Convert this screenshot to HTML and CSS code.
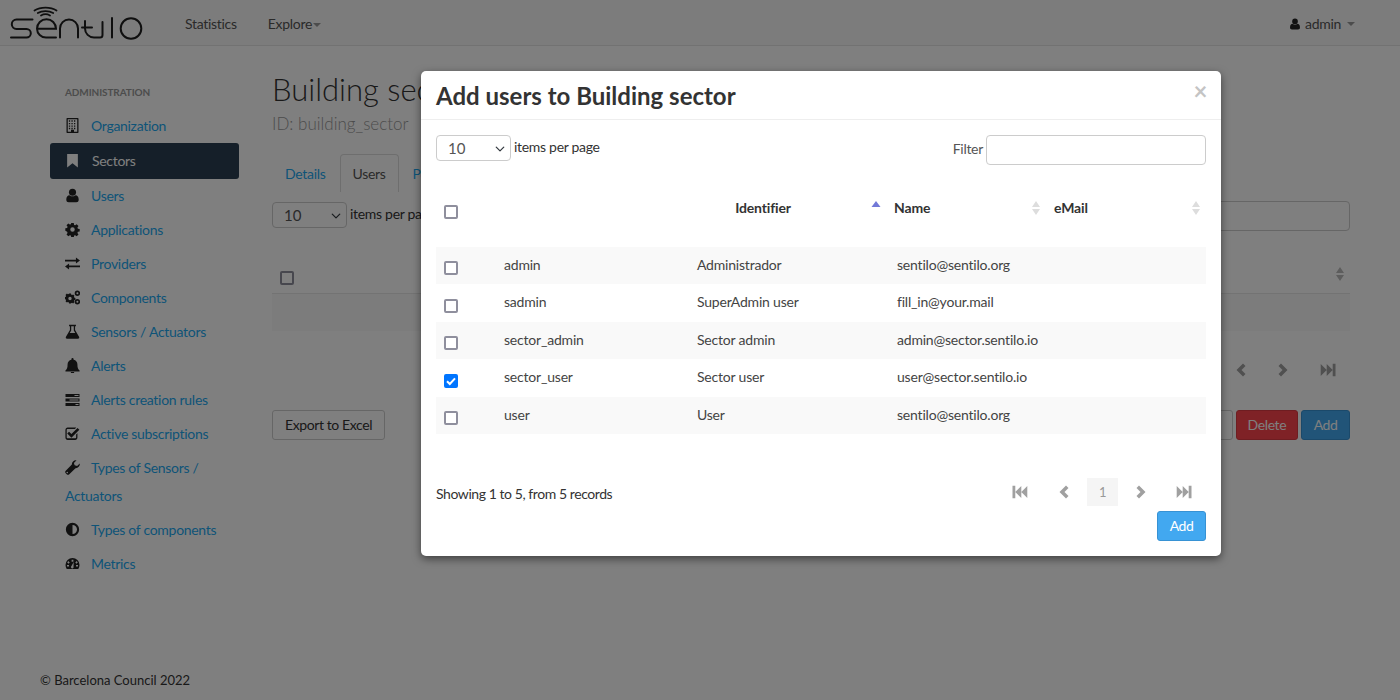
FILE: index.html
```html
<!DOCTYPE html>
<html lang="en">
<head>
<meta charset="utf-8">
<title>Sentilo</title>
<link rel="stylesheet" href="styles.css">
</head>
<body>
<svg class="sprite" aria-hidden="true">
  <symbol id="i-building" viewBox="0 0 14 14"><path fill-rule="evenodd" d="M2 0h10a.6.6 0 0 1 .6.6v12.8a.6.6 0 0 1-.6.6H2a.6.6 0 0 1-.6-.6V.6A.6.6 0 0 1 2 0zm.6 1.2v11.6h3V11h2.8v1.8h3V1.2zM3.6 2.2h1.2v1.2H3.6zm2.4 0h1.200v1.200H6zm2.400 0h1.200v1.200H8.400zm2 0h.1zM3.600 4.600h1.200v1.200H3.600zm2.400 0h1.200v1.200H6zm2.400 0h1.200v1.200H8.400zM3.600 7h1.200v1.200H3.600zM6 7h1.200v1.200H6zm2.400 0h1.200v1.200H8.400zM3.600 9.200h1.200v1.200H3.600zm2.400 0h1.200v1.200H6zm2.400 0h1.200v1.200H8.400z"/></symbol>
  <symbol id="i-bookmark" viewBox="0 0 14 14"><path d="M2 1h10v12.500L7 9.500 2 13.500z"/></symbol>
  <symbol id="i-user" viewBox="0 0 14 14"><circle cx="7" cy="4" r="3.300"/><path d="M1.200 11c0-2.800 1.200-4.300 3-4.300 1 .8 1.800 1.100 2.800 1.100s1.800-.3 2.800-1.100c1.800 0 3 1.500 3 4.300 0 1.600-1 2.300-2.200 2.300H3.400c-1.200 0-2.200-.7-2.200-2.300z"/></symbol>
  <symbol id="i-cog" viewBox="0 0 14 14"><path fill-rule="evenodd" d="M5.800 1h2.400l.3 1.700 1 .4 1.400-1 1.700 1.700-1 1.400.4 1 1.700.3v2.400l-1.700.3-.4 1 1 1.400-1.700 1.700-1.400-1-1 .4-.3 1.700H5.800l-.3-1.700-1-.4-1.400 1-1.700-1.700 1-1.400-.4-1L.3 8.200V5.800L2 5.500l.4-1-1-1.400 1.700-1.700 1.400 1 1-.4zM7 4.900a2.100 2.100 0 1 0 0 4.200 2.100 2.100 0 0 0 0-4.200z"/></symbol>
  <symbol id="i-exchange" viewBox="0 0 14 14"><path d="M0 3.400h10.200V1.500L14 4.300l-3.800 2.800V5.200H0zM14 8.800H3.800V6.900L0 9.700l3.800 2.800v-1.900H14z"/></symbol>
  <symbol id="i-cogs" viewBox="0 0 15 14"><path fill-rule="evenodd" d="M4 3h2l.3 1.200.8.300 1-.6 1.400 1.400-.6 1 .3.800 1.200.3v2l-1.200.3-.3.800.6 1-1.400 1.400-1-.6-.8.300L6 13H4l-.3-1.200-.8-.3-1 .6L.5 10.700l.6-1-.3-.8L-.4 8.600v-2l1.200-.3.300-.8-.6-1L1.900 3.100l1 .6.8-.3zM5 6.300a1.700 1.700 0 1 0 0 3.400 1.700 1.700 0 0 0 0-3.400z"/><path fill-rule="evenodd" d="M12.400 0a2.700 2.700 0 1 1 0 5.400 2.700 2.700 0 0 1 0-5.400zm0 1.700a1 1 0 1 0 0 2 1 1 0 0 0 0-2zM12.400 8.600a2.700 2.700 0 1 1 0 5.400 2.700 2.700 0 0 1 0-5.400zm0 1.700a1 1 0 1 0 0 2 1 1 0 0 0 0-2z"/></symbol>
  <symbol id="i-flask" viewBox="0 0 14 14"><path fill-rule="evenodd" d="M3.800.8h6.400V2H9.400v3.600l3.700 6.200c.5.900 0 1.900-1 1.900H1.900c-1 0-1.500-1-1-1.900l3.700-6.200V2h-.8zM5.800 2v4L4.400 8.400h5.200L8.200 6V2z"/></symbol>
  <symbol id="i-bell" viewBox="0 0 14 14"><path d="M7 0a1 1 0 0 1 1 1v.6c2.300.4 3.600 2.200 3.600 4.400 0 3.200.6 4.500 2 5.700v.8H.4v-.8c1.400-1.200 2-2.500 2-5.700 0-2.200 1.300-4 3.600-4.400V1a1 1 0 0 1 1-1zM5.400 13.100h3.200a1.600 1.600 0 0 1-3.200 0z"/></symbol>
  <symbol id="i-tasks" viewBox="0 0 15 14"><path fill-rule="evenodd" d="M.5 1.500h14v3H.5zm9 1v1h4v-1zM.5 6h14v3H.5zm4 1v1h9V7zM.5 10.500h14v3H.5zm10 1v1h3v-1z"/></symbol>
  <symbol id="i-check" viewBox="0 0 14 14"><path d="M2.500 1.500h8l-1.200 1.200H2.500c-.5 0-.9.400-.9.900v7c0 .5.400.9.900.9h7c.5 0 .9-.4.900-.9V8l1.200-1.200v4c0 1.300-.9 2.200-2.100 2.200h-7C1.300 13 .4 12.100.4 10.800v-7c0-1.300.9-2.300 2.100-2.300z"/><path d="M3.800 5.300l2.200 2.200 5.700-5.700 1.700 1.700L6 10.900 2.100 7z"/></symbol>
  <symbol id="i-wrench" viewBox="0 0 14 14"><path fill-rule="evenodd" d="M13.800 3.200c.4 2.300-1.500 4.600-4 4.400L4 13.300c-.7.700-1.700.7-2.400 0l-.9-.9c-.7-.7-.7-1.700 0-2.400l5.700-5.800C6.200 1.700 8.400-.2 10.800.2L8.300 2.700l.7 2.300 2.300.7zM2.600 11.100a.7.7 0 1 0 0 1 .7.7 0 0 0 0-1z"/></symbol>
  <symbol id="i-adjust" viewBox="0 0 14 14"><path fill-rule="evenodd" d="M7 .8a6.200 6.200 0 1 1 0 12.400A6.200 6.200 0 0 1 7 .8zm0 2v8.400a4.200 4.200 0 0 1 0-8.400z" transform="matrix(-1 0 0 1 14 0)"/></symbol>
  <symbol id="i-dash" viewBox="0 0 15 14"><path fill-rule="evenodd" d="M7.500 1.500a7 7 0 0 1 7 7c0 1.500-.4 2.800-1.200 4H1.700C.9 11.300.5 10 .5 8.500a7 7 0 0 1 7-7zM6.600 3.200v2h1.800v-2zM3.300 4.600L2.200 6l1.400 1.200L4.700 6zm8.400 0L10.300 6l1.100 1.200L12.800 6zM2 8.600V10h2V8.600zm9 0V10h2V8.600zM8.700 5.500L6.500 9.600a1.300 1.300 0 1 0 2 .6z"/></symbol>
  <symbol id="i-first" viewBox="0 0 16 14"><path d="M.5 .8h2.800v12.400H.5zM3.300 7l6-6v12zM9.300 7l6-6v12z"/></symbol>
  <symbol id="i-prev" viewBox="0 0 10 14"><path d="M7 .5L9.500 3l-4 4 4 4L7 13.500.5 7z"/></symbol>
  <symbol id="i-next" viewBox="0 0 10 14"><path d="M3 .5L.5 3l4 4-4 4L3 13.500 9.500 7z"/></symbol>
  <symbol id="i-last" viewBox="0 0 16 14"><path d="M15.500 .8h-2.800v12.400h2.800zM12.700 7l-6-6v12zM6.700 7l-6-6v12z"/></symbol>
  <symbol id="i-sort" viewBox="0 0 10 16"><path d="M5 1l4 6H1zM5 15L1 9h8z"/></symbol>
  <symbol id="i-sort-up" viewBox="0 0 10 16"><path d="M5 3l4.500 6h-9z"/></symbol>
  <symbol id="i-chev" viewBox="0 0 16 16"><path d="M2 5l6 6 6-6" fill="none" stroke="#343a40" stroke-width="2" stroke-linecap="round" stroke-linejoin="round"/></symbol>
</svg>

<header class="navbar">
  <svg class="logo" viewBox="0 0 145 45" role="img" aria-label="sentilo">
    <g fill="none" stroke="#1e1e1e" stroke-width="2" stroke-linecap="round">
      <path d="M32.500 19.500H16.500a4.700 4.700 0 0 0 0 9.400h10a4.300 4.300 0 0 1 0 8.600H11"/>
      <path d="M37 28.700h19a9.500 9.500 0 0 0-19 0 9 9 0 0 0 9 8.800h10"/>
      <path d="M60 37.500V28.500a9 9 0 0 1 18 0V37.500"/>
      <path d="M85 21v7.500a9 9 0 0 0 9 9h6a2.500 2.500 0 0 0 2.500-2.500V22"/>
      <path d="M82 27.500h10"/>
      <path d="M112 18V37.500"/>
      <circle cx="131" cy="28.500" r="10.300"/>
      <path d="M34.500 10.500a15 9 0 0 1 22 0M37.800 13a11 6.500 0 0 1 15.400 0M41 15.500a6.500 4 0 0 1 9 0" stroke-width="1.800"/>
    </g>
  </svg>
  <nav class="nav-links">
    <a class="nav-link">Statistics</a>
    <a class="nav-link">Explore<span class="caret"></span></a>
  </nav>
  <div class="nav-user">
    <svg class="ico-user"><use href="#i-user"/></svg>
    <span>admin</span>
    <span class="caret caret-user"></span>
  </div>
</header>

<div class="layout">
  <aside class="sidebar">
    <div class="side-title">ADMINISTRATION</div>
    <ul class="side-list">
      <li class="side-item"><svg class="ico"><use href="#i-building"/></svg><a>Organization</a></li>
      <li class="side-item active"><svg class="ico"><use href="#i-bookmark"/></svg><a>Sectors</a></li>
      <li class="side-item"><svg class="ico"><use href="#i-user"/></svg><a>Users</a></li>
      <li class="side-item"><svg class="ico"><use href="#i-cog"/></svg><a>Applications</a></li>
      <li class="side-item"><svg class="ico"><use href="#i-exchange"/></svg><a>Providers</a></li>
      <li class="side-item"><svg class="ico"><use href="#i-cogs"/></svg><a>Components</a></li>
      <li class="side-item"><svg class="ico"><use href="#i-flask"/></svg><a>Sensors / Actuators</a></li>
      <li class="side-item"><svg class="ico"><use href="#i-bell"/></svg><a>Alerts</a></li>
      <li class="side-item"><svg class="ico"><use href="#i-tasks"/></svg><a>Alerts creation rules</a></li>
      <li class="side-item"><svg class="ico"><use href="#i-check"/></svg><a>Active subscriptions</a></li>
      <li class="side-item"><svg class="ico"><use href="#i-wrench"/></svg><a>Types of Sensors / Actuators</a></li>
      <li class="side-item"><svg class="ico"><use href="#i-adjust"/></svg><a>Types of components</a></li>
      <li class="side-item"><svg class="ico"><use href="#i-dash"/></svg><a>Metrics</a></li>
    </ul>
  </aside>

  <main class="main">
    <h1 class="page-title">Building sector</h1>
    <p class="page-sub">ID: building_sector</p>
    <div class="tabs">
      <a class="tab">Details</a>
      <a class="tab tab-active">Users</a>
      <a class="tab">Permissions</a>
    </div>
    <div class="tools">
      <label class="per-page"><span class="select-wrap"><select class="select"><option>10</option></select><svg class="chev"><use href="#i-chev"/></svg></span> <span class="pp-text">items per page</span></label>
      <input class="filter back-filter" type="text" aria-label="Filter">
    </div>
    <div class="back-head">
      <span class="cbox"></span>
      <svg class="back-sort"><use href="#i-sort"/></svg>
    </div>
    <div class="back-row"></div>
    <div class="back-pager">
      <svg class="pg"><use href="#i-prev"/></svg>
      <svg class="pg"><use href="#i-next"/></svg>
      <svg class="pg-wide"><use href="#i-last"/></svg>
    </div>
    <div class="back-actions">
      <button class="btn">Export to Excel</button>
      <span class="spacer"></span>
      <button class="btn">Assign</button>
      <button class="btn btn-danger">Delete</button>
      <button class="btn btn-primary">Add</button>
    </div>
  </main>
</div>

<footer class="footer">© Barcelona Council 2022</footer>

<div class="overlay"></div>

<section class="modal">
  <div class="modal-head">
    <h2 class="modal-title">Add users to Building sector</h2>
    <span class="close">×</span>
  </div>
  <div class="modal-body">
    <div class="modal-tools">
      <label class="per-page"><span class="select-wrap"><select class="select"><option>10</option></select><svg class="chev"><use href="#i-chev"/></svg></span> <span class="pp-text">items per page</span></label>
      <label class="filter-wrap"><span class="pp-text">Filter</span> <input class="filter modal-filter" type="text"></label>
    </div>
    <div class="thead">
      <span class="cell-check"><span class="cbox"></span></span>
      <span class="th th-center">Identifier<svg class="sort sort-on"><use href="#i-sort-up"/></svg></span>
      <span class="th">Name<svg class="sort"><use href="#i-sort"/></svg></span>
      <span class="th">eMail<svg class="sort"><use href="#i-sort"/></svg></span>
    </div>
    <div class="tbody">
      <div class="tr"><span class="cell-check"><span class="cbox"></span></span><span>admin</span><span>Administrador</span><span>sentilo@sentilo.org</span></div>
      <div class="tr"><span class="cell-check"><span class="cbox"></span></span><span>sadmin</span><span>SuperAdmin user</span><span>fill_in@your.mail</span></div>
      <div class="tr"><span class="cell-check"><span class="cbox"></span></span><span>sector_admin</span><span>Sector admin</span><span>admin@sector.sentilo.io</span></div>
      <div class="tr"><span class="cell-check"><span class="cbox cbox-on"><svg viewBox="0 0 14 14"><path d="M3 7.200l2.800 2.800L11 4.300" fill="none" stroke="#fff" stroke-width="2"/></svg></span></span><span>sector_user</span><span>Sector user</span><span>user@sector.sentilo.io</span></div>
      <div class="tr"><span class="cell-check"><span class="cbox"></span></span><span>user</span><span>User</span><span>sentilo@sentilo.org</span></div>
    </div>
    <div class="modal-foot">
      <span class="records">Showing 1 to 5, from 5 records</span>
      <div class="pager">
        <svg class="pg-wide pg-first"><use href="#i-first"/></svg>
        <svg class="pg"><use href="#i-prev"/></svg>
        <span class="pg-num">1</span>
        <svg class="pg"><use href="#i-next"/></svg>
        <svg class="pg-wide pg-last"><use href="#i-last"/></svg>
      </div>
    </div>
    <div class="modal-actions"><button class="btn btn-add">Add</button></div>
  </div>
</section>
</body>
</html>
```
FILE: styles.css
```css
* { box-sizing: border-box; }
html, body { height: 100%; }
body {
  margin: 0;
  height: 700px;
  overflow: hidden;
  background: #fff;
  color: #333;
  font-family: "Lato", "Liberation Sans", sans-serif;
  font-size: 14px;
  line-height: 20px;
  letter-spacing: -.3px;
  position: relative;
}
.sprite { display: none; }

.navbar {
  height: 46px;
  background: #f9f9f9;
  border-bottom: 1px solid #e4e4e4;
  display: flex;
  align-items: center;
  padding-left: 0;
  padding-right: 45px;
}
.logo { width: 145px; height: 45px; flex: none; }
.nav-links { display: flex; gap: 31px; margin-left: 40px; padding-top: 2px; }
.nav-link { color: #555; }
.caret {
  display: inline-block;
  width: 0; height: 0;
  margin-left: 1px;
  vertical-align: 2px;
  border-top: 4px solid #999;
  border-left: 4px solid transparent;
  border-right: 4px solid transparent;
}
.nav-user { margin-left: auto; display: flex; align-items: center; color: #555; padding-top: 2px; }
.ico-user { width: 12px; height: 12px; margin-right: 4px; fill: #222; }
.caret-user { margin-left: 6px; }

.layout { display: flex; }
.sidebar { width: 222px; margin-left: 50px; flex: none; padding-top: 36px; }
.side-title { font-size: 10px; font-weight: 700; color: #999; padding-left: 15px; line-height: 20px; margin-bottom: 7px; letter-spacing: -.1px; }
.side-list { list-style: none; margin: 0; padding: 0; width: 189px; }
.side-item { padding: 3px 15px; line-height: 28px; color: #1ca8f0; }
.side-item a { color: #1ca8f0; }
.ico { width: 15px; height: 15px; fill: #222; margin: 0 11px 0 0; vertical-align: -2px; display: inline-block; }
.side-item.active {
  background: #2a3f52;
  border-radius: 3px;
  padding: 4px 15px;
}
.side-item.active a { color: #fff; }
.side-item.active .ico { fill: #fff; margin-right: 12px; }

.main { flex: 1; margin-right: 50px; min-width: 0; padding-top: 22px; }
.page-title { font-size: 31px; line-height: 42px; font-weight: 300; margin: 0; color: #333; letter-spacing: 0; }
.page-sub { font-size: 17px; line-height: 24px; font-weight: 300; color: #999; margin: 2px 0 0; letter-spacing: 0; }
.tabs { display: flex; margin-top: 18px; height: 38px; }
.tab { padding: 9px 12px; color: #1ca8f0; border: 1px solid transparent; margin-right: 1px; }
.tab-active { color: #555; border-color: #ddd; border-bottom: 0; border-radius: 4px 4px 0 0; background: #fff; }
.tools { display: flex; justify-content: space-between; align-items: center; margin-top: 9px; }
.tools .per-page { margin-top: -2px; }
.per-page { display: flex; align-items: center; gap: 3px; }
.pp-text { margin-bottom: 2px; }
.select-wrap { position: relative; display: block; height: 26px; }
.select {
  display: block;
  appearance: none;
  -webkit-appearance: none;
  width: 75px; height: 26px;
  font: inherit; font-size: 15px;
  letter-spacing: 0;
  color: #555;
  border: 1px solid #ccc;
  border-radius: 4px;
  background: #fff;
  padding-left: 11px;
}
.chev { position: absolute; right: 6px; top: 9px; width: 10px; height: 10px; }
.filter { height: 30px; border: 1px solid #ccc; border-radius: 4px; background: #fff; }
.back-filter { width: 400px; }
.back-head { height: 63px; padding: 40px 8px 0; display: flex; justify-content: space-between; border-bottom: 1px solid #e6e6e6; }
.back-sort { width: 10px; height: 16px; fill: #bbb; margin-top: -5px; margin-right: -3px; }
.back-row { height: 37px; background: #f9f9f9; }
.back-pager { display: flex; justify-content: flex-end; align-items: center; gap: 32px; height: 20px; margin-top: 29px; padding-right: 14px; }
.back-actions { display: flex; gap: 3px; margin-top: 30px; }
.spacer { flex: 1; }

.btn {
  height: 30px;
  padding: 0 12px;
  font: inherit;
  letter-spacing: -.4px;
  color: #333;
  background: #fff;
  border: 1px solid #ccc;
  border-radius: 3px;
}
.btn-danger { background: #ff444c; border-color: #dc3b42; color: #fff; padding: 0 11px; }
.btn-primary, .btn-add { background: #42a8f0; border-color: #3792d4; color: #fff; padding: 0 11.5px; }

.footer { position: absolute; left: 40px; top: 670px; color: #333; font-size: 13px; letter-spacing: 0; }

.cbox { display: block; width: 14px; height: 14px; border: 2px solid #8f8f9d; border-radius: 2px; background: #fff; flex: none; }
.cbox-on { background: #0075ff; border-color: #0075ff; position: relative; }
.cbox-on svg { display: block; width: 14px; height: 14px; margin: -2px; }
.pg { width: 10px; height: 14px; fill: #a0a0a0; flex: none; }
.pg-wide { width: 16px; height: 14px; fill: #a0a0a0; flex: none; }

.overlay { position: absolute; inset: 0; background: rgba(0, 0, 0, .5); }

.modal {
  position: absolute;
  left: 421px; top: 71px;
  width: 800px; height: 485px;
  background: #fff;
  border-radius: 5px;
  box-shadow: 0 3px 9px rgba(0, 0, 0, .5);
  display: flex;
  flex-direction: column;
}
.modal-head {
  height: 49px;
  border-bottom: 1px solid #eee;
  display: flex;
  justify-content: space-between;
  padding: 2px 15px 0;
  align-items: center;
}
.modal-title { margin: 0; font-size: 24px; line-height: 30px; font-weight: 700; color: #333; letter-spacing: 0; }
.close { font-size: 24px; font-weight: 700; color: #c4c4c4; margin-top: -10px; margin-right: -1px; }
.modal-body { padding: 15px; flex: 1; }
.modal-tools { display: flex; justify-content: space-between; align-items: flex-start; height: 45px; }
.filter-wrap { display: flex; align-items: center; gap: 3px; color: #555; }
.modal-filter { width: 220px; }
.thead {
  display: grid;
  grid-template-columns: 208px 242px 160px 160px;
  height: 67px;
  align-items: center;
  font-weight: 700;
  font-size: 14px;
  letter-spacing: -.15px;
}
.cell-check { padding-left: 8px; }
.th { display: flex; position: relative; padding-left: 8px; align-items: center; margin-top: -11px; }
.th-center { justify-content: center; padding-left: 0; padding-right: 4px; }
.thead .cell-check { margin-top: -3px; }
.sort { position: absolute; right: 5px; top: 2px; width: 10px; height: 16px; fill: #ddd; }
.sort-on { fill: #7279d8; top: 0; }
.tr {
  display: grid;
  grid-template-columns: 68px 193px 200px 1fr;
  height: 37.500px;
  padding-bottom: 1px;
  align-items: center;
  color: #444;
  letter-spacing: -.2px;
}
.tr:nth-child(odd) { background: #f9f9f9; }
.tr .cell-check { padding-top: 7px; }
.modal-foot { display: flex; justify-content: space-between; align-items: center; margin-top: 44px; height: 28px; }
.records { margin-top: 4px; color: #333; letter-spacing: -.43px; }
.pager { display: flex; align-items: center; gap: 18px; padding-right: 14px; }
.pg-first { margin-right: 13px; }
.pg-last { margin-left: 12px; }
.pg-num { width: 31px; height: 28px; background: #f5f5f5; color: #999; text-align: center; line-height: 28px; font-size: 13px; }
.modal-actions { display: flex; justify-content: flex-end; margin-top: 5px; }
```
